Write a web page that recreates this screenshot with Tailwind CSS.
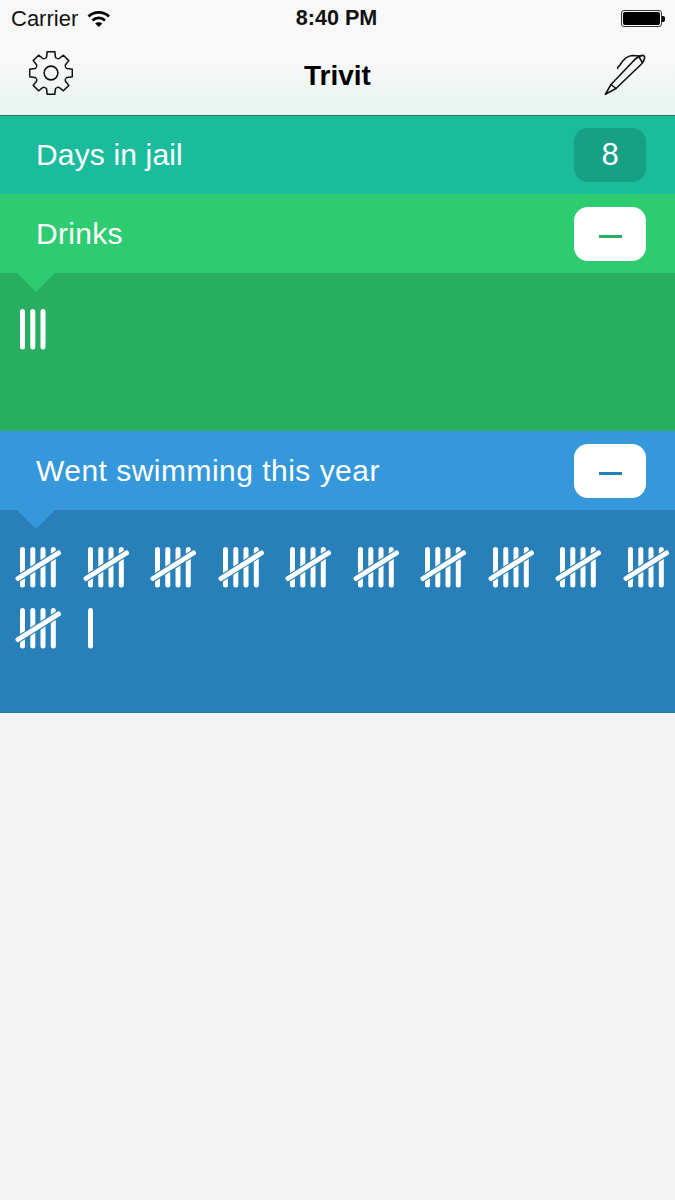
<!DOCTYPE html>
<html>
<head>
<meta charset="utf-8">
<script src="https://cdn.jsdelivr.net/npm/@tailwindcss/browser@4"></script>
</head>
<body class="bg-[#f4f4f4] font-['Liberation_Sans',sans-serif]">
<svg class="hidden" width="0" height="0">
  <defs>
    <g id="tally" fill="none" stroke-linecap="round">
      <path stroke="#fff" stroke-width="5" d="M7.5 4.5V40M17.8 4.5V40M28 4.5V40M38.3 4.5V40"/>
      <path stroke="#2980b9" stroke-width="7" d="M3 33.5L43.5 8"/>
      <path stroke="#fff" stroke-width="5" d="M3 33.5L43.5 8"/>
    </g>
    <path id="tooth" d="M-6 -15L-4.6 -16.8L-4 -22.3H4L4.6 -16.8L6 -15"/>
  </defs>
</svg>
<div class="w-[675px] h-[1200px] overflow-hidden flex flex-col">
  <header class="h-[116px] shrink-0 flex flex-col border-b border-[#3d6b62] bg-gradient-to-b from-[#f8f8f8] from-55% to-[#e6f5f1]">
    <div class="h-[37px] pl-[11px] pr-[10px] grid grid-cols-3 items-center text-[22px] text-[#111]">
      <div class="flex items-center gap-[9px]">
        <span>Carrier</span>
        <svg width="24" height="18" viewBox="0 0 24 18" fill="none" stroke="#000" stroke-width="2.6">
          <path d="M1.5 6.5C7 1 16.5 1 22 6.5"/>
          <path d="M5.5 10.5C9 7 14.5 7 18 10.5"/>
          <path d="M11.8 17L8.2 13.4C10 11.7 13.5 11.7 15.3 13.4Z" fill="#000" stroke="none"/>
        </svg>
      </div>
      <div class="text-center font-bold whitespace-nowrap text-[21.6px] pr-[3px]">8:40 PM</div>
      <div class="flex justify-end items-center">
        <div class="w-[41px] h-[17px] rounded-[3px] border border-[#333] p-[1px]"><div class="w-full h-full bg-black rounded-[2px]"></div></div>
        <div class="w-[3px] h-[6px] bg-black rounded-r-[2px]"></div>
      </div>
    </div>
    <div class="flex-1 px-[28px] flex items-center justify-between relative">
      <svg class="mb-[6px] ml-[1px]" width="44" height="44" viewBox="-23 -23 46 46" fill="none" stroke="#111" stroke-width="1.6" stroke-linejoin="round">
        <circle r="7.2"/>
        <use href="#tooth"/>
        <use href="#tooth" transform="rotate(45)"/>
        <use href="#tooth" transform="rotate(90)"/>
        <use href="#tooth" transform="rotate(135)"/>
        <use href="#tooth" transform="rotate(180)"/>
        <use href="#tooth" transform="rotate(225)"/>
        <use href="#tooth" transform="rotate(270)"/>
        <use href="#tooth" transform="rotate(315)"/>
      </svg>
      <span class="absolute left-0 right-0 text-center font-bold text-[28px] text-black">Trivit</span>
      <svg class="mb-[3px] mr-[-2px]" width="46" height="46" viewBox="0 0 46 46" fill="none" stroke="#111" stroke-width="1.6" stroke-linejoin="round" stroke-linecap="round">
        <path d="M2.3 42.3L8 32.5L29 10.5C33 6 38 3 40.5 3.5C42.5 4.5 41.5 8.5 38.5 12L13 36.5Z"/>
        <path d="M8 32.5L13 36.5"/>
        <path d="M36 5L39.5 10.5"/>
        <path d="M14.7 16.3C14 15 16 14.5 17 13C20 8 24 4 29 3.5L37 4"/>
      </svg>
    </div>
  </header>

  <section class="h-[78px] shrink-0 bg-[#1abc9c] flex items-center justify-between pl-[36px] pr-[29px] text-white text-[30px]">
    <span class="mb-[2px] tracking-[0.15px]">Days in jail</span>
    <div class="w-[72px] h-[54px] rounded-[14px] bg-[#16a085] flex items-center justify-center text-[31px]">8</div>
  </section>

  <section class="h-[79px] shrink-0 bg-[#2ecc71] flex items-center justify-between pl-[36px] pr-[29px] text-white text-[30px]">
    <span class="tracking-[0.3px]">Drinks</span>
    <div class="w-[72px] h-[54px] rounded-[14px] bg-white flex items-center justify-center"><div class="w-[23px] h-[3px] mt-[5px] bg-[#27ae60]"></div></div>
  </section>
  <section class="h-[158px] shrink-0 bg-[#27ae60] relative pl-[15px] pt-[35px]">
    <svg class="absolute left-[17px] top-0" width="38" height="19" viewBox="0 0 38 19"><path d="M0 0H38L19 19Z" fill="#2ecc71"/></svg>
    <svg class="block" width="55" height="42" viewBox="0 0 55 42" fill="none" stroke="#fff" stroke-width="5" stroke-linecap="round">
      <path d="M7.5 3.5V39M17.8 3.5V39M28 3.5V39"/>
    </svg>
  </section>

  <section class="h-[79px] shrink-0 bg-[#3498db] flex items-center justify-between pl-[36px] pr-[29px] text-white text-[30px]">
    <span class="tracking-[0.48px]">Went swimming this year</span>
    <div class="w-[72px] h-[54px] rounded-[14px] bg-white flex items-center justify-center"><div class="w-[23px] h-[3px] mt-[5px] bg-[#2980b9]"></div></div>
  </section>
  <section class="h-[203px] shrink-0 bg-[#2980b9] border-b border-[#2674a8] relative pl-[15px] pt-[35px] overflow-hidden">
    <svg class="absolute left-[17px] top-0" width="38" height="19" viewBox="0 0 38 19"><path d="M0 0H38L19 19Z" fill="#3498db"/></svg>
    <div class="grid grid-cols-[repeat(10,67.5px)] auto-rows-[61px] w-[675px]">
      <svg width="50" height="44" viewBox="0 0 50 44"><use href="#tally"/></svg>
      <svg width="50" height="44" viewBox="0 0 50 44"><use href="#tally"/></svg>
      <svg width="50" height="44" viewBox="0 0 50 44"><use href="#tally"/></svg>
      <svg width="50" height="44" viewBox="0 0 50 44"><use href="#tally"/></svg>
      <svg width="50" height="44" viewBox="0 0 50 44"><use href="#tally"/></svg>
      <svg width="50" height="44" viewBox="0 0 50 44"><use href="#tally"/></svg>
      <svg width="50" height="44" viewBox="0 0 50 44"><use href="#tally"/></svg>
      <svg width="50" height="44" viewBox="0 0 50 44"><use href="#tally"/></svg>
      <svg width="50" height="44" viewBox="0 0 50 44"><use href="#tally"/></svg>
      <svg width="50" height="44" viewBox="0 0 50 44"><use href="#tally"/></svg>
      <svg width="50" height="44" viewBox="0 0 50 44"><use href="#tally"/></svg>
      <svg width="50" height="44" viewBox="0 0 50 44" fill="none" stroke="#fff" stroke-linecap="round"><path stroke-width="5" d="M7.5 4.5V40"/></svg>
    </div>
  </section>
</div>
</body>
</html>
